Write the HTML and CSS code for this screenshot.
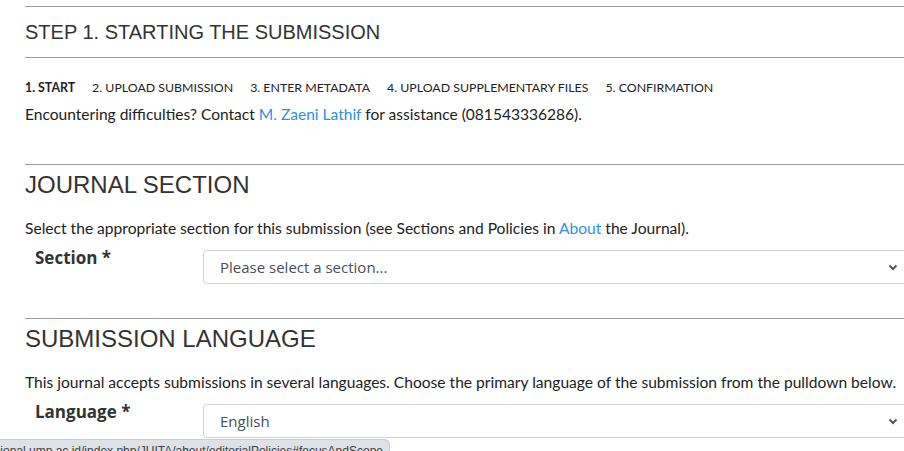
FILE: index.html
```html
<!DOCTYPE html>
<html lang="en">
<head>
<meta charset="utf-8">
<title>Step 1. Starting the Submission</title>
<link rel="stylesheet" href="styles.css">
</head>
<body>
<div class="page">
  <hr class="rule rule-top">
  <h2 class="step-title">STEP 1. STARTING THE SUBMISSION</h2>
  <hr class="rule">
  <ul class="steps">
    <li class="current">1. START</li>
    <li>2. UPLOAD SUBMISSION</li>
    <li>3. ENTER METADATA</li>
    <li>4. UPLOAD SUPPLEMENTARY FILES</li>
    <li>5. CONFIRMATION</li>
  </ul>
  <p class="help">Encountering difficulties? Contact <a href="#">M. Zaeni Lathif</a> for assistance (081543336286).</p>

  <section class="block">
    <hr class="rule">
    <h3 class="block-title">JOURNAL SECTION</h3>
    <p class="text">Select the appropriate section for this submission (see Sections and Policies in <a href="#">About</a> the Journal).</p>
    <div class="field">
      <label class="label">Section *</label>
      <div class="select">
        <span class="select-value">Please select a section...</span>
        <svg class="chevron" width="10" height="8" viewBox="0 0 10 8"><path d="M1.5 2.5 L5 6 L8.5 2.5" fill="none" stroke="#555" stroke-width="2"/></svg>
      </div>
    </div>
  </section>

  <section class="block">
    <hr class="rule">
    <h3 class="block-title">SUBMISSION LANGUAGE</h3>
    <p class="text">This journal accepts submissions in several languages. Choose the primary language of the submission from the pulldown below.</p>
    <div class="field">
      <label class="label">Language *</label>
      <div class="select">
        <span class="select-value">English</span>
        <svg class="chevron" width="10" height="8" viewBox="0 0 10 8"><path d="M1.5 2.5 L5 6 L8.5 2.5" fill="none" stroke="#555" stroke-width="2"/></svg>
      </div>
    </div>
  </section>
</div>
<div class="status"><span class="status-url">https://jurnalnasional.ump.ac.id/index.php/JUITA/about/editorialPolicies#focusAndScope</span></div>
</body>
</html>
```
FILE: styles.css
```css
html, body {
  margin: 0;
  padding: 0;
  background: #fff;
  overflow: hidden;
}
body {
  width: 904px;
  height: 451px;
  font-family: Lato, "Open Sans", sans-serif;
  color: #222;
}
.page {
  padding-left: 25px;
  width: 890px;
}
.rule {
  border: 0;
  border-top: 1px solid #999;
  margin: 0;
  height: 0;
}
.rule-top {
  margin-top: 6px;
}
.step-title {
  font-family: "Liberation Sans", Arial, sans-serif;
  font-weight: normal;
  font-size: 20px;
  line-height: 24px;
  color: #333;
  margin: 13px 0 13px;
}
.steps {
  list-style: none;
  margin: 22px 0 0;
  padding: 0;
  display: flex;
  gap: 17px;
  font-size: 12.35px;
  line-height: 16px;
  color: #222;
}
.steps .current {
  font-weight: bold;
}
.help {
  margin: 8px 0 0;
  font-size: 15.55px;
  line-height: 20px;
}
a {
  color: #2f8fe8;
  text-decoration: none;
}
.block {
  margin-top: 40px;
}
.block + .block {
  margin-top: 34px;
}
.block-title {
  font-family: "Liberation Sans", Arial, sans-serif;
  font-weight: normal;
  font-size: 24px;
  line-height: 28px;
  color: #333;
  margin: 6px 0 0;
}
.text {
  margin: 19px 0 0;
  font-size: 15.6px;
  line-height: 20px;
}
.field {
  display: flex;
  align-items: flex-start;
  margin-top: 6px;
}
.label {
  font-family: "Open Sans", sans-serif;
  font-weight: bold;
  font-size: 17px;
  line-height: 24px;
  color: #333;
  padding: 2px 0 0 10px;
  width: 168px;
}
.select {
  margin-top: 6px;
  flex: 1;
  height: 34px;
  box-sizing: border-box;
  border: 1px solid #ced4da;
  border-radius: 4px;
  display: flex;
  align-items: center;
  padding-left: 16px;
  padding-right: 16px;
  font-family: "Open Sans", sans-serif;
  font-size: 15px;
  color: #495057;
}
.select-value {
  flex: 1;
  padding-bottom: 1px;
}
.chevron {
  display: block;
}
.status {
  position: fixed;
  left: 0;
  top: 439px;
  width: 390px;
  height: 20px;
  box-sizing: border-box;
  background: #dee1e6;
  border: 1px solid #c9ccd1;
  border-left: 0;
  border-top-right-radius: 6px;
  display: flex;
  justify-content: flex-end;
  overflow: hidden;
  padding: 2px 6px 0 0;
  font-family: "Liberation Sans", Arial, sans-serif;
  font-size: 12px;
  line-height: 18px;
  color: #3c4043;
  white-space: nowrap;
}
.status-url {
  flex: none;
}
```
